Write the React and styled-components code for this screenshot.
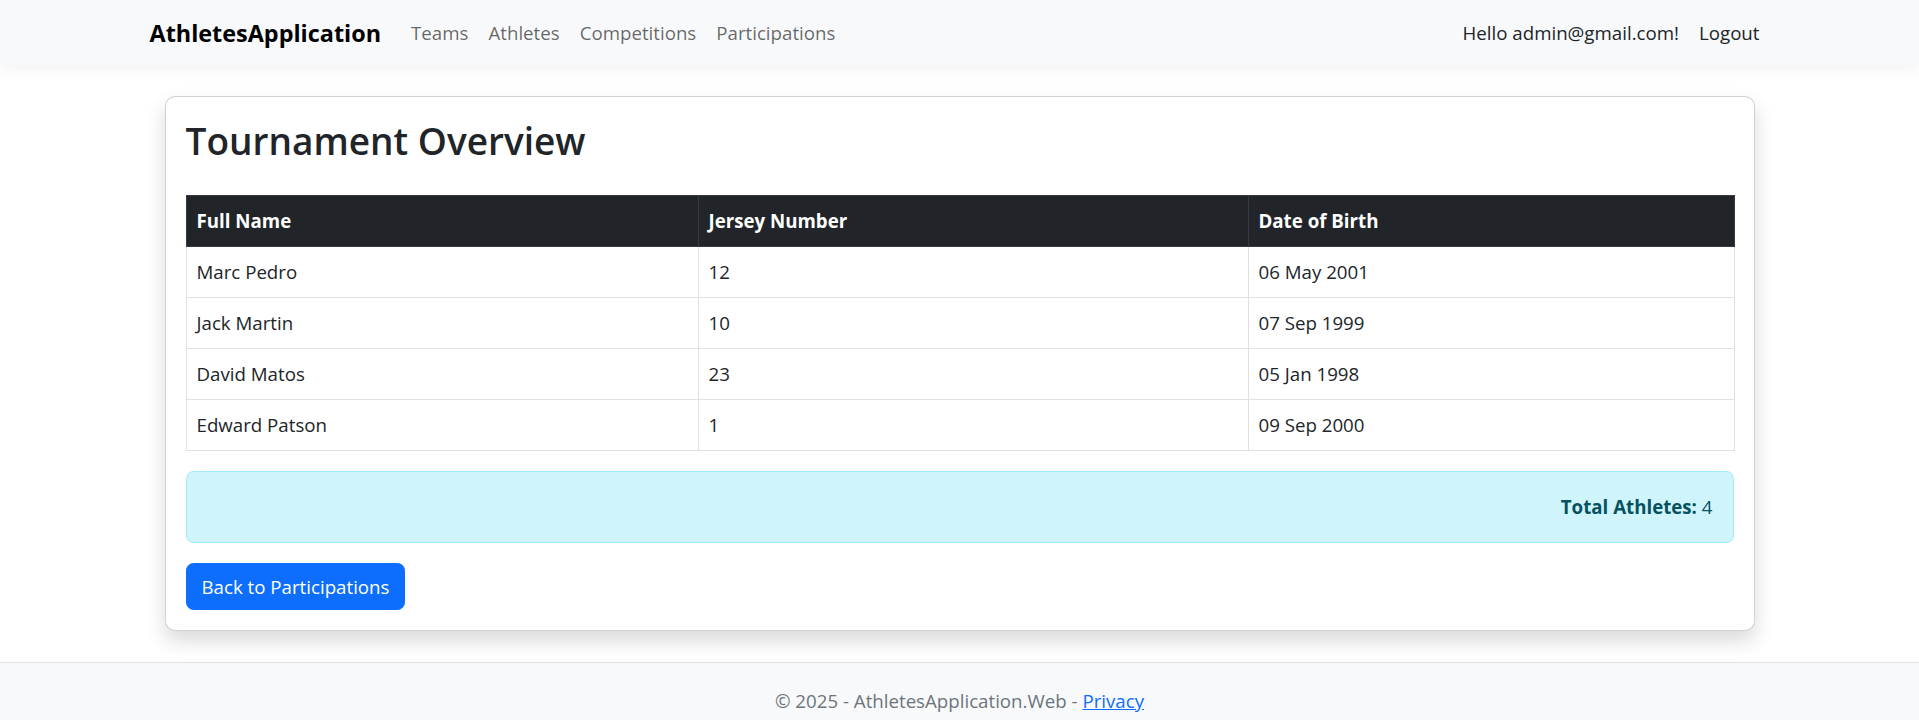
import React from 'react';
import styled, { createGlobalStyle } from 'styled-components';

const athletes = [
  { id: 1, fullName: 'Marc Pedro', jersey: 12, birth: '06 May 2001' },
  { id: 2, fullName: 'Jack Martin', jersey: 10, birth: '07 Sep 1999' },
  { id: 3, fullName: 'David Matos', jersey: 23, birth: '05 Jan 1998' },
  { id: 4, fullName: 'Edward Patson', jersey: 1, birth: '09 Sep 2000' },
];

const GlobalStyle = createGlobalStyle`
  * {
    box-sizing: border-box;
  }

  html,
  body {
    margin: 0;
    padding: 0;
    background: #fff;
  }

  body {
    font-family: 'Open Sans', 'Noto Sans', 'DejaVu Sans', sans-serif;
    font-size: 18.7px;
    line-height: 30px;
    color: #212529;
  }
`;

const Page = styled.div`
  min-height: 720px;
  display: flex;
  flex-direction: column;
`;

const Navbar = styled.nav`
  height: 65px;
  background: #f8f9fa;
  box-shadow: 0 5px 15px rgba(0, 0, 0, 0.05);
  position: relative;
  z-index: 1;
`;

const Container = styled.div`
  width: 1650px;
  margin: 0 auto;
  padding: 0 15px;
`;

const NavInner = styled(Container)`
  height: 100%;
  display: flex;
  align-items: center;
`;

const Brand = styled.a`
  font-size: 23.4px;
  font-weight: 700;
  color: #000;
  text-decoration: none;
  margin-right: 20px;
`;

const NavList = styled.div`
  display: flex;
  align-items: center;
  margin-left: ${(p) => (p.end ? 'auto' : '0')};
`;

const NavLink = styled.a`
  padding: 0 10px;
  color: ${(p) => (p.dark ? '#212529' : 'rgba(0, 0, 0, 0.6)')};
  text-decoration: none;
`;

const Main = styled.main`
  padding: 31px 0 31px;
`;

const Card = styled.section`
  margin: 0 15px;
  background: #fff;
  border: 1px solid rgba(0, 0, 0, 0.175);
  border-radius: 10px;
  box-shadow: 0 10px 20px rgba(0, 0, 0, 0.15);
  padding: 20px;
`;

const Title = styled.h2`
  margin: 0 0 30px;
  font-size: 37px;
  font-weight: 600;
  line-height: 48px;
`;

const Table = styled.table`
  width: 100%;
  table-layout: fixed;
  border-collapse: collapse;
  margin-bottom: 20px;
`;

const HeadCell = styled.th`
  width: ${(p) => p.w}px;
  background: #212529;
  color: #fff;
  font-weight: 700;
  text-align: left;
  padding: 10px;
  border: 1px solid #373b3e;
`;

const Cell = styled.td`
  padding: 10px;
  border: 1px solid #dee2e6;
`;

const Alert = styled.div`
  background: #cff4fc;
  border: 1px solid #9eeaf9;
  border-radius: 7.5px;
  color: #055160;
  padding: 20px;
  text-align: right;
  margin-bottom: 20px;
`;

const Button = styled.a`
  display: inline-block;
  background: #0d6efd;
  border: 1px solid #0d6efd;
  color: #fff;
  border-radius: 7.5px;
  padding: 7.5px 15px;
  text-decoration: none;
`;

const Footer = styled.footer`
  margin-top: auto;
  border-top: 1px solid #dee2e6;
  background: #f8f9fa;
  color: #6c757d;
  text-align: center;
  line-height: 75px;
`;

const FooterLink = styled.a`
  color: #0d6efd;
  text-decoration: underline;
`;

const App = () => (
  <>
    <GlobalStyle />
    <Page>
      <Navbar>
        <NavInner>
          <Brand href="#">AthletesApplication</Brand>
          <NavList>
            <NavLink href="#">Teams</NavLink>
            <NavLink href="#">Athletes</NavLink>
            <NavLink href="#">Competitions</NavLink>
            <NavLink href="#">Participations</NavLink>
          </NavList>
          <NavList end>
            <NavLink dark href="#">Hello admin@gmail.com!</NavLink>
            <NavLink dark href="#">Logout</NavLink>
          </NavList>
        </NavInner>
      </Navbar>

      <Main>
        <Container>
          <Card>
            <Title>Tournament Overview</Title>
            <Table>
              <thead>
                <tr>
                  <HeadCell w={512}>Full Name</HeadCell>
                  <HeadCell w={550}>Jersey Number</HeadCell>
                  <HeadCell w={486}>Date of Birth</HeadCell>
                </tr>
              </thead>
              <tbody>
                {athletes.map((a) => (
                  <tr key={a.id}>
                    <Cell>{a.fullName}</Cell>
                    <Cell>{a.jersey}</Cell>
                    <Cell>{a.birth}</Cell>
                  </tr>
                ))}
              </tbody>
            </Table>
            <Alert>
              <strong>Total Athletes:</strong> {athletes.length}
            </Alert>
            <Button href="#">Back to Participations</Button>
          </Card>
        </Container>
      </Main>

      <Footer>
        <Container>
          &copy; 2025 - AthletesApplication.Web - <FooterLink href="#">Privacy</FooterLink>
        </Container>
      </Footer>
    </Page>
  </>
);

export default App;
